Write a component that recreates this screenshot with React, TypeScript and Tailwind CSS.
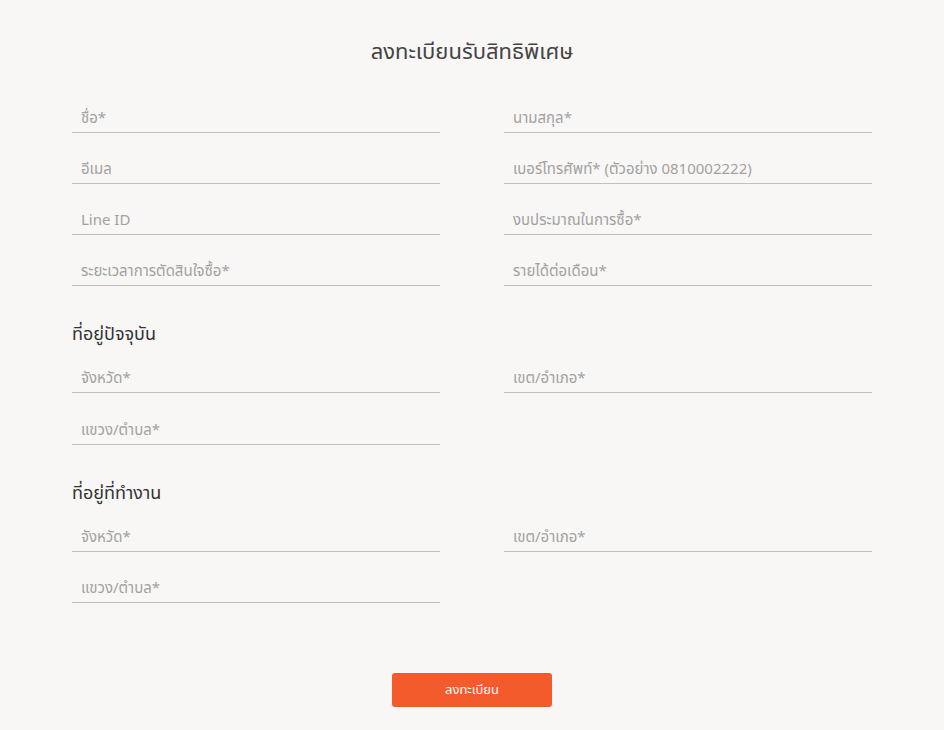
import React from "react";

const font = { fontFamily: '"Noto Sans", "Noto Sans Thai", "Liberation Sans", sans-serif' };

function Field({ placeholder }: { placeholder: string }) {
  return (
    <input
      type="text"
      placeholder={placeholder}
      className="h-9 w-full border-b border-[#c2c0bf] bg-transparent px-[9px] pt-1 text-[15px] text-[#555] outline-none placeholder:text-[#a3a19f]"
      style={font}
    />
  );
}

function Section({ title }: { title: string }) {
  return <h2 className="mt-[35px] mb-3 h-6 text-[18px] leading-6 text-[#333]">{title}</h2>;
}

export default function App() {
  return (
    <div className="min-h-[730px] w-full bg-[#f8f7f6]" style={font}>
      <div className="mx-auto w-[800px] pt-[36px]">
        <h1 className="text-center text-[22px] leading-7 text-[#444]">ลงทะเบียนรับสิทธิพิเศษ</h1>

        <div className="mt-[33px] grid grid-cols-2 gap-x-[64px] gap-y-[15px]">
          <Field placeholder="ชื่อ*" />
          <Field placeholder="นามสกุล*" />
          <Field placeholder="อีเมล" />
          <Field placeholder="เบอร์โทรศัพท์* (ตัวอย่าง 0810002222)" />
          <Field placeholder="Line ID" />
          <Field placeholder="งบประมาณในการซื้อ*" />
          <Field placeholder="ระยะเวลาการตัดสินใจซื้อ*" />
          <Field placeholder="รายได้ต่อเดือน*" />
        </div>

        <Section title="ที่อยู่ปัจจุบัน" />
        <div className="grid grid-cols-2 gap-x-[64px] gap-y-[16px]">
          <Field placeholder="จังหวัด*" />
          <Field placeholder="เขต/อำเภอ*" />
          <Field placeholder="แขวง/ตำบล*" />
        </div>

        <Section title="ที่อยู่ที่ทำงาน" />
        <div className="grid grid-cols-2 gap-x-[64px] gap-y-[15px]">
          <Field placeholder="จังหวัด*" />
          <Field placeholder="เขต/อำเภอ*" />
          <Field placeholder="แขวง/ตำบล*" />
        </div>

        <div className="mt-[70px] flex justify-center pb-6">
          <button className="h-[34px] w-[160px] rounded-[3px] bg-[#f35a2c] text-[13px] text-white">
            ลงทะเบียน
          </button>
        </div>
      </div>
    </div>
  );
}
